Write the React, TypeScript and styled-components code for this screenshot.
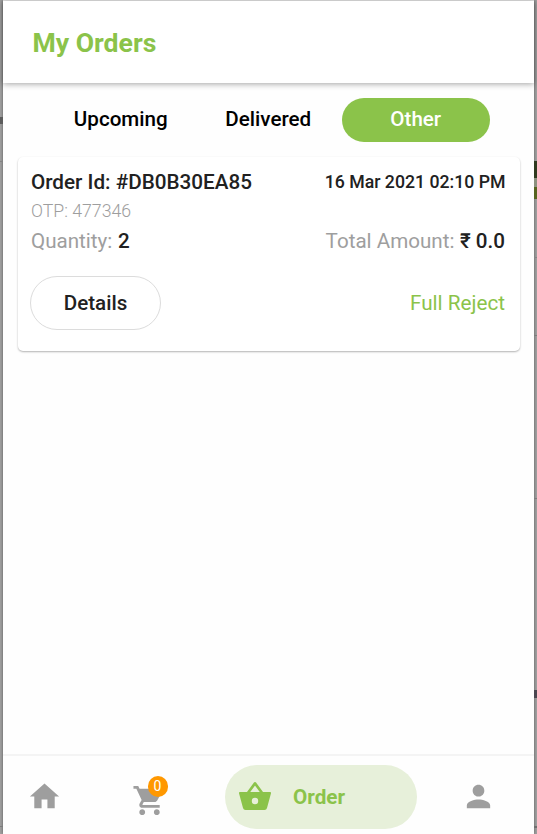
import styled, { createGlobalStyle } from "styled-components";
import { MdHome, MdPerson, MdShoppingCart } from "react-icons/md";

const tabs = ["Upcoming", "Delivered", "Other"];

const order = {
  id: "#DB0B30EA85",
  date: "16 Mar 2021 02:10 PM",
  otp: "477346",
  quantity: 2,
  total: "₹ 0.0",
  status: "Full Reject",
};

const BasketIcon = () => (
  <svg viewBox="0 0 35 35">
    <path d="M9.500 14.500L17 4.300L24.500 14.500" fill="none" stroke="currentColor" strokeWidth="2.6" strokeLinejoin="round" />
    <path
      fill="currentColor"
      fillRule="evenodd"
      d="M2 13h30q1.300 0 1 1.300L29 29q-.5 2-2.500 2h-19q-2 0-2.500-2L1 14.300q-.3-1.300 1-1.300zM17 18.800a3.200 3.200 0 1 0 0 6.400a3.200 3.200 0 1 0 0-6.400z"
    />
  </svg>
);

export default function App() {
  return (
    <>
      <GlobalStyle />
      <Page>
        <Edge>
          <Mark $top={117} $height={7} $color="#5c5c5c" />
          <Mark $top={161} $height={1} $color="#838383" />
          <Mark $top={826} $height={1} $color="#7c7c7c" />
        </Edge>
        <Screen>
          <Header>
            <Title>My Orders</Title>
          </Header>
          <Tabs>
            {tabs.map((tab) => (
              <Tab key={tab} $active={tab === "Other"}>
                {tab}
              </Tab>
            ))}
          </Tabs>
          <Content>
            <Card>
              <TopRow>
                <OrderId>Order Id: {order.id}</OrderId>
                <OrderDate>{order.date}</OrderDate>
              </TopRow>
              <Otp>OTP: {order.otp}</Otp>
              <Row>
                <Label>
                  Quantity: <Value>{order.quantity}</Value>
                </Label>
                <Label>
                  Total Amount: <Value>{order.total}</Value>
                </Label>
              </Row>
              <ActionRow>
                <DetailsButton>Details</DetailsButton>
                <Status>{order.status}</Status>
              </ActionRow>
            </Card>
          </Content>
          <BottomBar>
            <NavItem>
              <MdHome />
            </NavItem>
            <CartItem>
              <MdShoppingCart />
              <Badge>0</Badge>
            </CartItem>
            <ActiveItem>
              <BasketIcon />
              <NavLabel>Order</NavLabel>
            </ActiveItem>
            <NavItem>
              <MdPerson />
            </NavItem>
          </BottomBar>
        </Screen>
        <Edge>
          <Mark $top={161} $height={17} $color="#2f3a1f" />
          <Mark $top={178} $height={9} $color="#8c917f" />
          <Mark $top={187} $height={12} $color="#56641f" />
          <Mark $top={257} $height={1} $color="#858585" />
          <Mark $top={335} $height={1} $color="#7c7c7c" />
          <Mark $top={498} $height={1} $color="#7c7c7c" />
          <Mark $top={690} $height={8} $color="#4a4650" />
          <Mark $top={826} $height={2} $color="#6f6f6f" />
        </Edge>
      </Page>
    </>
  );
}

const GlobalStyle = createGlobalStyle`
  * {
    box-sizing: border-box;
  }

  body {
    margin: 0;
    background-color: #a0a0a0;
    font-family: Roboto, "Noto Sans", sans-serif;
  }

  button {
    font-family: inherit;
  }
`;

const Page = styled.div`
  display: flex;
  height: 834px;
  overflow: hidden;
`;

const Edge = styled.div`
  position: relative;
  width: 3px;
`;

const Mark = styled.span<{ $top: number; $height: number; $color: string }>`
  position: absolute;
  top: ${(props) => props.$top}px;
  left: 0;
  width: 3px;
  height: ${(props) => props.$height}px;
  background-color: ${(props) => props.$color};
`;

const Screen = styled.div`
  display: flex;
  flex: 1;
  flex-direction: column;
  background-color: #fefefe;
  border-top: 1px solid #e4e4e4;
  box-shadow: 0 0 3px rgba(0, 0, 0, 0.45);
`;

const Header = styled.header`
  display: flex;
  align-items: center;
  height: 82px;
  padding: 2px 0 0 29.5px;
  background-color: #ffffff;
  box-shadow: 0 1px 6px rgba(0, 0, 0, 0.36);
`;

const Title = styled.h1`
  margin: 0;
  color: #8bc34a;
  font-size: 26.6px;
  font-weight: 700;
  line-height: 32px;
`;

const Tabs = styled.nav`
  display: flex;
  margin-top: 15px;
  padding-left: 44px;
`;

const Tab = styled.button<{ $active: boolean }>`
  width: 147.5px;
  height: 44px;
  padding: 0 0 3px;
  border: none;
  border-radius: 22px;
  background-color: ${(props) => (props.$active ? "#8bc34a" : "transparent")};
  color: ${(props) => (props.$active ? "#ffffff" : "#000000")};
  font-size: 20.6px;
  font-weight: 500;
`;

const Content = styled.main`
  flex: 1;
  padding: 15px 14.5px 0 15px;
`;

const Card = styled.section`
  height: 194px;
  padding: 10px 14.5px 0 13px;
  border-radius: 5px;
  background-color: #ffffff;
  box-shadow: 0 1px 2px rgba(0, 0, 0, 0.3);
`;

const Row = styled.div`
  display: flex;
  align-items: center;
  justify-content: space-between;
`;

const TopRow = styled(Row)`
  height: 30px;
  margin-right: -0.5px;
`;

const OrderId = styled.span`
  color: #212121;
  font-size: 20.7px;
  font-weight: 500;
`;

const OrderDate = styled.span`
  color: #212121;
  font-size: 17.7px;
  font-weight: 500;
`;

const Otp = styled.div`
  height: 29px;
  color: #9e9e9e;
  font-size: 17.7px;
  font-weight: 300;
  line-height: 29px;
`;

const Label = styled.span`
  color: #9e9e9e;
  font-size: 20.6px;
  line-height: 30px;
`;

const Value = styled.span`
  margin-left: 0.5px;
  color: #212121;
  font-weight: 500;
`;

const ActionRow = styled(Row)`
  margin-top: 20px;
`;

const DetailsButton = styled.button`
  width: 131px;
  height: 54px;
  margin-left: -1px;
  border: 1px solid #dcdcdc;
  border-radius: 27px;
  background-color: #ffffff;
  color: #212121;
  font-size: 20.6px;
  font-weight: 500;
`;

const Status = styled.span`
  color: #8bc34a;
  font-size: 20.7px;
`;

const BottomBar = styled.footer`
  display: flex;
  align-items: center;
  height: 80px;
  padding: 3px 38.5px 0 24px;
  border-top: 2px solid #f4f4f4;
  background-color: #fefefe;
`;

const NavItem = styled.div`
  display: flex;
  width: 35px;
  color: #9e9e9e;

  svg {
    flex-shrink: 0;
    width: 35px;
    height: 35px;
  }
`;

const CartItem = styled(NavItem)`
  position: relative;
  margin: 7px 58.5px 0 69.5px;
`;

const Badge = styled.span`
  position: absolute;
  top: -7px;
  right: -1px;
  width: 20px;
  height: 21px;
  border-radius: 10px;
  background-color: #ff9800;
  color: #ffffff;
  font-size: 14px;
  line-height: 21px;
  text-align: center;
`;

const ActiveItem = styled(NavItem)`
  align-items: center;
  width: 192px;
  height: 64px;
  margin-right: auto;
  padding-left: 13px;
  border-radius: 32px;
  background-color: #e7f0da;
  color: #8bc34a;
`;

const NavLabel = styled.span`
  margin-left: 20px;
  font-size: 20.7px;
  font-weight: 700;
`;
